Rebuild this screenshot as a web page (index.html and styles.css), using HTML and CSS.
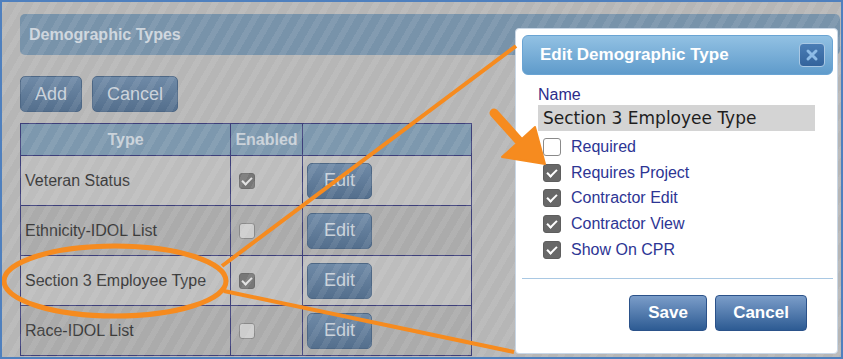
FILE: index.html
```html
<html>
<head>
	<link rel="stylesheet" href="styles.css">
</head>
<body>
	<div class="frame">
		<div class="page">
			<div class="panel-head">Demographic Types</div>
			<div class="toolbar">
				<button class="btn add">Add</button>
				<button class="btn cancel">Cancel</button>
			</div>
			<table class="types">
				<tr>
					<th class="col-type">Type</th>
					<th class="col-enabled">Enabled</th>
					<th class="col-edit"></th>
				</tr>
				<tr class="light">
					<td>Veteran Status</td>
					<td><span class="box checked"></span></td>
					<td><button class="btn edit">Edit</button></td>
				</tr>
				<tr class="dark">
					<td>Ethnicity-IDOL List</td>
					<td><span class="box"></span></td>
					<td><button class="btn edit">Edit</button></td>
				</tr>
				<tr class="light">
					<td>Section 3 Employee Type</td>
					<td><span class="box checked"></span></td>
					<td><button class="btn edit">Edit</button></td>
				</tr>
				<tr class="dark">
					<td>Race-IDOL List</td>
					<td><span class="box"></span></td>
					<td><button class="btn edit">Edit</button></td>
				</tr>
			</table>
		</div>

		<div class="shade"></div>

		<div class="dialog">
			<div class="dlg-title">
				<span>Edit Demographic Type</span>
				<span class="close">
					<svg width="14" height="14" viewBox="0 0 14 14">
						<path d="M3 3 L11 11 M11 3 L3 11" stroke="#8dbbe6" stroke-width="3" stroke-linecap="round"/>
					</svg>
				</span>
			</div>
			<div class="dlg-body">
				<div class="field-label">Name</div>
				<div class="field-input">Section 3 Employee Type</div>
				<ul class="options">
					<li><span class="box"></span>Required</li>
					<li><span class="box checked"></span>Requires Project</li>
					<li><span class="box checked"></span>Contractor Edit</li>
					<li><span class="box checked"></span>Contractor View</li>
					<li><span class="box checked"></span>Show On CPR</li>
				</ul>
			</div>
			<div class="divider"></div>
			<div class="dlg-buttons">
				<button class="dbtn save">Save</button>
				<button class="dbtn cancel">Cancel</button>
			</div>
		</div>

		<svg class="marks" width="843" height="359" viewBox="0 0 843 359">
			<ellipse cx="115" cy="281" rx="111" ry="35" fill="none" stroke="#f68b1f" stroke-width="5"/>
			<line x1="222" y1="266" x2="516" y2="46" stroke="#f68b1f" stroke-width="4"/>
			<line x1="224" y1="291" x2="514" y2="352" stroke="#f68b1f" stroke-width="4"/>
			<line x1="494" y1="113" x2="520" y2="142" stroke="#f68b1f" stroke-width="9" stroke-linecap="round"/>
			<polygon points="502,157 535,127 545,164" fill="#f68b1f" stroke="#f68b1f" stroke-width="2" stroke-linejoin="round"/>
		</svg>
	</div>
</body>
</html>
```

FILE: styles.css
```css
* {
	margin: 0;
	padding: 0;
	box-sizing: border-box;
}
body {
	font-family: "Liberation Sans", Arial, sans-serif;
	background: white;
}

.frame {
	position: relative;
	width: 843px;
	height: 359px;
	border: 2px solid #4f80be;
	background: #b6b6b6;
	overflow: hidden;
}

.page {
	padding: 12px 1px 0 18px;
}

.panel-head {
	height: 41px;
	border-radius: 5px;
	background: #7893aa;
	color: #cdd5dd;
	font-weight: bold;
	font-size: 16px;
	line-height: 41px;
	padding-left: 9px;
}

.toolbar {
	display: flex;
	gap: 10px;
	margin-top: 21px;
}

.btn {
	height: 36px;
	border: 1px solid #4d6785;
	border-radius: 5px;
	background: linear-gradient(#6f8aa7, #546f8d);
	color: #c9d1da;
	font-family: "Liberation Sans", Arial, sans-serif;
	font-size: 18px;
}
.btn.add {
	width: 62px;
}
.btn.cancel {
	width: 86px;
}

.types {
	margin-top: 11px;
	width: 452px;
	table-layout: fixed;
	border-collapse: collapse;
	font-size: 16px;
	color: #3b3b3b;
}
.types th,
.types td {
	border: 1px solid #3d3f7a;
}
.types th {
	height: 32px;
	background: #7d98ae;
	color: #c9d1d9;
	font-size: 16px;
}
.col-type {
	width: 210px;
}
.col-enabled {
	width: 72px;
}
.types td {
	height: 50px;
	vertical-align: middle;
}
.types td:first-child {
	padding-left: 4px;
}
.types td:nth-child(2) {
	padding-left: 8px;
}
.types td:nth-child(3) {
	padding-left: 4px;
}
.types .light td {
	background: #bdbdbd;
}
.types .dark td {
	background: #ababab;
}
.btn.edit {
	width: 65px;
	display: block;
}

.box {
	display: inline-block;
	position: relative;
	width: 16px;
	height: 16px;
	border: 1px solid #8a8a8a;
	border-radius: 3px;
	background: #cdcdcd;
	vertical-align: middle;
}
.box.checked {
	background: #777;
	border-color: #6c6c6c;
}
.box.checked::after {
	content: '';
	position: absolute;
	left: 4px;
	top: 1px;
	width: 4px;
	height: 8px;
	border-right: 2px solid #e2e2e2;
	border-bottom: 2px solid #e2e2e2;
	transform: rotate(45deg);
}

.shade {
	position: absolute;
	inset: 0;
	background: repeating-linear-gradient(120deg, rgba(255, 255, 255, 0.08) 0 6px, rgba(255, 255, 255, 0) 6px 14px);
}

/* dialog */
.dialog {
	position: absolute;
	left: 513px;
	top: 26px;
	width: 323px;
	height: 326px;
	padding: 6px 4px 0 6px;
	background: white;
	border: 1px solid #c9d7e6;
	border-radius: 4px;
}

.dlg-title {
	height: 40px;
	display: flex;
	align-items: center;
	justify-content: space-between;
	padding: 0 7px 0 17px;
	border: 1px solid #6aa4d3;
	border-radius: 6px;
	background: linear-gradient(#92c1e3, #5f9bcb);
	color: white;
	font-weight: bold;
	font-size: 17px;
}

.close {
	width: 26px;
	height: 24px;
	display: flex;
	align-items: center;
	justify-content: center;
	border: 1px solid #a9c8e4;
	border-radius: 4px;
	background: linear-gradient(#4a7db5, #33639c);
}

.dlg-body {
	padding-left: 16px;
}

.field-label {
	margin-top: 10px;
	line-height: 20px;
	font-size: 16px;
	color: #2c2c8a;
}

.field-input {
	width: 277px;
	height: 26px;
	padding-left: 5px;
	background: #d4d4d4;
	font-family: "DejaVu Sans", Verdana, sans-serif;
	font-size: 17px;
	line-height: 26px;
	color: #1e1e1e;
}

.options {
	list-style: none;
	margin-top: 3px;
}
.options li {
	height: 25.8px;
	display: flex;
	align-items: center;
	gap: 10px;
	padding-left: 5px;
	font-size: 16px;
	color: #2d3594;
}
.options .box {
	width: 18px;
	height: 18px;
	background: white;
	border-color: #8a8a8a;
}
.options .box.checked {
	background: #686868;
	border-color: #5e5e5e;
}
.options .box.checked::after {
	left: 5px;
	top: 2px;
	border-color: white;
}

.divider {
	margin-top: 15px;
	height: 1px;
	background: #a9c8e3;
}

.dlg-buttons {
	display: flex;
	justify-content: flex-end;
	gap: 8px;
	margin-top: 16px;
	padding-right: 26px;
}

.dbtn {
	height: 36px;
	border: 1px solid #2b528a;
	border-radius: 4px;
	background: linear-gradient(#7b9dc9, #2d5b93);
	color: white;
	font-family: "Liberation Sans", Arial, sans-serif;
	font-weight: bold;
	font-size: 17px;
}
.dbtn.save {
	width: 78px;
}
.dbtn.cancel {
	width: 92px;
}

.marks {
	position: absolute;
	left: -2px;
	top: -2px;
}
```
